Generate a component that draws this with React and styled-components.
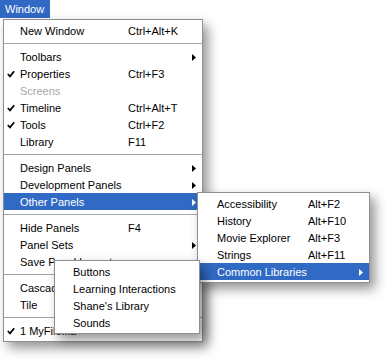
import React from "react";
import styled, { createGlobalStyle } from "styled-components";

const GlobalStyle = createGlobalStyle`
  html, body { margin: 0; padding: 0; background: #ffffff; }
  body { font-family: "Liberation Sans", Arial, sans-serif; font-size: 11px; color: #000; }
`;

const Canvas = styled.div`
  position: relative;
  width: 387px;
  height: 360px;
  overflow: hidden;
  background: #ffffff;
`;

const MenuTitle = styled.div`
  width: 50px;
  height: 18px;
  line-height: 19px;
  padding-left: 5px;
  box-sizing: border-box;
  background: #316ac5;
  color: #ffffff;
  font-size: 11px;
`;

const Menu = styled.div`
  box-sizing: border-box;
  width: ${(p) => p.$w}px;
  background: #ffffff;
  border: 1px solid #8f8f8f;
  padding: 2px 0;
  box-shadow: 5px 6px 11px rgba(0, 0, 0, 0.42);
`;

const MainMenu = styled(Menu)`
  margin: 1px 0 0 3px;
`;

const Popup = styled(Menu)`
  position: absolute;
  left: ${(p) => p.$x}px;
  top: ${(p) => p.$y}px;
  z-index: ${(p) => p.$z};
`;

const Row = styled.div`
  display: grid;
  grid-template-columns: ${(p) => p.$indent}px ${(p) => p.$label}px 1fr 4px;
  align-items: center;
  box-sizing: border-box;
  height: 17px;
  padding: 1px 6px 0 0;
  background: ${(p) => (p.$active ? "#316ac5" : "transparent")};
  color: ${(p) => (p.$active ? "#ffffff" : p.$disabled ? "#a8a8a8" : "#000000")};
  white-space: nowrap;
`;

const CheckCell = styled.span`
  display: flex;
  justify-content: flex-start;
  padding-left: 3px;
  align-items: center;
`;

const Label = styled.span`
  line-height: 16px;
`;

const Shortcut = styled.span`
  line-height: 16px;
`;

const Separator = styled.div`
  height: 0;
  margin: 4px 0;
  border-top: 1px solid #a6a6a6;
`;

const Check = () => (
  <svg width="8" height="8" viewBox="0 0 8 8">
    <polyline points="0.8,4 3,6.4 7.2,1.2" fill="none" stroke="#000" strokeWidth="1.7" />
  </svg>
);

const Arrow = ({ color }) => (
  <svg width="4" height="7" viewBox="0 0 4 7">
    <polygon points="0,0 4,3.5 0,7" fill={color} />
  </svg>
);

const MenuItem = ({ label, shortcut, checked, sub, active, disabled, indent = 16, labelW = 108 }) => (
  <Row $indent={indent} $label={labelW} $active={active} $disabled={disabled}>
    <CheckCell>{checked ? <Check /> : null}</CheckCell>
    <Label>{label}</Label>
    <Shortcut>{shortcut}</Shortcut>
    <span>{sub ? <Arrow color={active ? "#ffffff" : "#000000"} /> : null}</span>
  </Row>
);

const main = [
  { label: "New Window", shortcut: "Ctrl+Alt+K" },
  "sep",
  { label: "Toolbars", sub: true },
  { label: "Properties", shortcut: "Ctrl+F3", checked: true },
  { label: "Screens", disabled: true },
  { label: "Timeline", shortcut: "Ctrl+Alt+T", checked: true },
  { label: "Tools", shortcut: "Ctrl+F2", checked: true },
  { label: "Library", shortcut: "F11" },
  "sep",
  { label: "Design Panels", sub: true },
  { label: "Development Panels", sub: true },
  { label: "Other Panels", sub: true, active: true },
  "sep",
  { label: "Hide Panels", shortcut: "F4" },
  { label: "Panel Sets", sub: true },
  { label: "Save Panel Layout..." },
  "sep",
  { label: "Cascade" },
  { label: "Tile" },
  "sep",
  { label: "1 MyFile.fla", checked: true },
];

const other = [
  { label: "Accessibility", shortcut: "Alt+F2" },
  { label: "History", shortcut: "Alt+F10" },
  { label: "Movie Explorer", shortcut: "Alt+F3" },
  { label: "Strings", shortcut: "Alt+F11" },
  { label: "Common Libraries", sub: true, active: true },
];

const libraries = [
  { label: "Buttons" },
  { label: "Learning Interactions" },
  { label: "Shane's Library" },
  { label: "Sounds" },
];

const renderItems = (items, indent, labelW) =>
  items.map((it, i) =>
    it === "sep" ? (
      <Separator key={i} />
    ) : (
      <MenuItem key={i} {...it} indent={indent} labelW={labelW} />
    )
  );

export default function App() {
  return (
    <Canvas>
      <GlobalStyle />
      <MenuTitle>Window</MenuTitle>
      <MainMenu $w={200}>{renderItems(main, 16, 108)}</MainMenu>
      <Popup $x={197} $y={192} $w={173} $z={2}>
        {renderItems(other, 19, 91)}
      </Popup>
      <Popup $x={54} $y={260} $w={146} $z={3}>
        {renderItems(libraries, 18, 110)}
      </Popup>
    </Canvas>
  );
}
